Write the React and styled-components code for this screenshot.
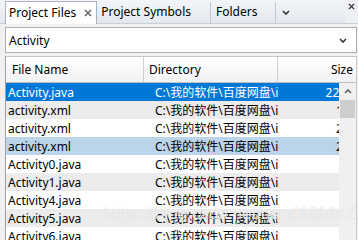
import React from "react";
import styled, { createGlobalStyle } from "styled-components";

const GlobalStyle = createGlobalStyle`
  html, body {
    margin: 0;
    padding: 0;
    background: #f0f0f0;
    overflow: hidden;
  }
  body {
    font-family: "Noto Sans", "Noto Sans CJK SC", sans-serif;
    font-size: 12px;
    color: #000;
  }
`;

const Frame = styled.div`
  position: relative;
  width: 358px;
  height: 240px;
  overflow: hidden;
  padding-left: 5px;
  box-sizing: border-box;
  display: flex;
  flex-direction: column;
`;

const TabBar = styled.div`
  height: 24px;
  display: flex;
  align-items: flex-end;
  box-sizing: border-box;
  border-bottom: 1px solid #c9ced6;
  background: linear-gradient(#f3f5f8, #e3e8ee);
  margin-left: -5px;
  padding-left: 5px;
`;

const Tab = styled.div`
  height: 21px;
  box-sizing: border-box;
  display: flex;
  align-items: center;
  gap: 8px;
  padding: 0 ${(p) => p.$pr || 4}px 1px ${(p) => p.$pl || 3}px;
  white-space: nowrap;
  line-height: 1;
  border-right: ${(p) => (p.$noline ? "none" : "1px solid #c2c8d0")};
  ${(p) =>
    p.$active &&
    `background: #fff;
     border: 1px solid #aab2bd;
     border-bottom: none;
     margin-bottom: -1px;
     height: 23px;`}
`;

const TabClose = styled.span`
  display: flex;
`;

const TabSpacer = styled.div`
  flex: 1;
  align-self: stretch;
`;

const PanelClose = styled.div`
  width: 13px;
  align-self: stretch;
  display: flex;
  justify-content: center;
  padding-top: 3px;
  box-sizing: border-box;
  background: #eef0f3;
`;

const Combo = styled.div`
  margin: 3px 1px 0 0;
  height: 26px;
  box-sizing: border-box;
  background: #fff;
  border: 1px solid #abadb3;
  display: flex;
  align-items: center;
  justify-content: space-between;
  padding: 1px 9px 0 3px;
`;

const List = styled.div`
  margin: 3px 1px 0 0;
  flex: 1;
  border-left: 1px solid #a0a0a0;
  border-right: 1px solid #c8c8c8;
  background: #fff;
  display: flex;
  flex-direction: column;
  overflow: hidden;
`;

const Header = styled.div`
  height: 27px;
  flex-shrink: 0;
  display: grid;
  grid-template-columns: 138px 134px 1fr;
  background: linear-gradient(#ffffff, #f1f2f4);
  border-top: 1px solid #c8c8c8;
  border-bottom: 1px solid #c0c0c0;
  box-sizing: border-box;
`;

const HeadCell = styled.div`
  display: flex;
  align-items: center;
  justify-content: ${(p) => (p.$right ? "flex-end" : "flex-start")};
  padding: 0 ${(p) => (p.$right ? "3px" : "0")} 0 ${(p) => p.$pl || 4}px;
  border-right: ${(p) => (p.$last ? "none" : "1px solid #d0d0d0")};
  white-space: nowrap;
  overflow: hidden;
`;

const Body = styled.div`
  flex: 1;
  display: flex;
  overflow: hidden;
`;

const Rows = styled.div`
  flex: 1;
  min-width: 0;
  overflow: hidden;
`;

const bgFor = (kind) =>
  kind === "sel" ? "#0078d7" : kind === "hi" ? "#bcd4e9" : kind === "alt" ? "#ececec" : "#fff";

const Row = styled.div`
  height: 18px;
  display: grid;
  grid-template-columns: 138px 134px minmax(0, 1fr);
  align-items: center;
  background: ${(p) => bgFor(p.$kind)};
  color: ${(p) => (p.$kind === "sel" ? "#fff" : "#000")};
  white-space: nowrap;
`;

const Cell = styled.div`
  overflow: hidden;
  padding-left: ${(p) => p.$pl || 0}px;
`;

const SizeText = styled.span`
  display: block;
  text-align: right;
  margin-right: -14px;
`;

const ScrollBar = styled.div`
  width: 17px;
  flex-shrink: 0;
  background: #f0f0f0;
  display: flex;
  flex-direction: column;
  align-items: center;
`;

const ScrollArrow = styled.div`
  height: 17px;
  width: 100%;
  display: flex;
  align-items: center;
  justify-content: center;
`;

const ScrollThumb = styled.div`
  width: 15px;
  height: 18px;
  background: #cdcdcd;
`;

const Watermark = styled.div`
  position: absolute;
  left: 104px;
  top: 204px;
  font-family: "Liberation Sans", sans-serif;
  font-size: 17px;
  color: rgba(255, 255, 255, 0.75);
  text-shadow: 0 0 1px rgba(150, 150, 150, 0.45);
  white-space: nowrap;
  pointer-events: none;
`;

const Chevron = ({ color = "#333" }) => (
  <svg width="8" height="5" viewBox="0 0 8 5">
    <path d="M1 1 L4 4 L7 1" fill="none" stroke={color} strokeWidth="1.6" />
  </svg>
);

const Cross = ({ size = 8, color = "#555" }) => (
  <svg width={size} height={size} viewBox="0 0 8 8">
    <path d="M1 1 L7 7 M7 1 L1 7" stroke={color} strokeWidth="1.6" />
  </svg>
);

const dir = "C:\\我的软件\\百度网盘\\ideaProjects";

const files = [
  { name: "Activity.java", size: "2290", kind: "sel" },
  { name: "activity.xml", size: "1.5", kind: "alt" },
  { name: "activity.xml", size: "2.4", kind: "" },
  { name: "activity.xml", size: "2.4", kind: "hi" },
  { name: "Activity0.java", size: "12", kind: "" },
  { name: "Activity1.java", size: "12", kind: "alt" },
  { name: "Activity4.java", size: "12", kind: "" },
  { name: "Activity5.java", size: "12", kind: "alt" },
  { name: "Activity6.java", size: "12", kind: "" },
];

export default function App() {
  return (
    <>
      <GlobalStyle />
      <Frame>
        <TabBar>
          <Tab $active>
            Project Files
            <TabClose>
              <Cross size={8} color="#666" />
            </TabClose>
          </Tab>
          <Tab $pl={4} $pr={19}>Project Symbols</Tab>
          <Tab $pl={5} $pr={18}>Folders</Tab>
          <Tab $pl={6} $pr={10} $noline>
            <Chevron />
          </Tab>
          <TabSpacer />
          <PanelClose>
            <Cross size={7} color="#333" />
          </PanelClose>
        </TabBar>
        <Combo>
          <span>Activity</span>
          <Chevron />
        </Combo>
        <List>
          <Header>
            <HeadCell $pl={6}>File Name</HeadCell>
            <HeadCell $pl={5}>Directory</HeadCell>
            <HeadCell $right $last>Size</HeadCell>
          </Header>
          <Body>
            <Rows>
              {files.map((f, i) => (
                <Row key={i} $kind={f.kind}>
                  <Cell $pl={2}>{f.name}</Cell>
                  <Cell $pl={11}>{dir}</Cell>
                  <Cell>
                    <SizeText>{f.size}</SizeText>
                  </Cell>
                </Row>
              ))}
            </Rows>
            <ScrollBar>
              <ScrollArrow>
                <svg width="8" height="5" viewBox="0 0 8 5">
                  <path d="M1 4 L4 1 L7 4" fill="none" stroke="#606060" strokeWidth="1.6" />
                </svg>
              </ScrollArrow>
              <ScrollThumb />
            </ScrollBar>
          </Body>
        </List>
        <Watermark>https://blog.csdn.net/qq_41816123</Watermark>
      </Frame>
    </>
  );
}
